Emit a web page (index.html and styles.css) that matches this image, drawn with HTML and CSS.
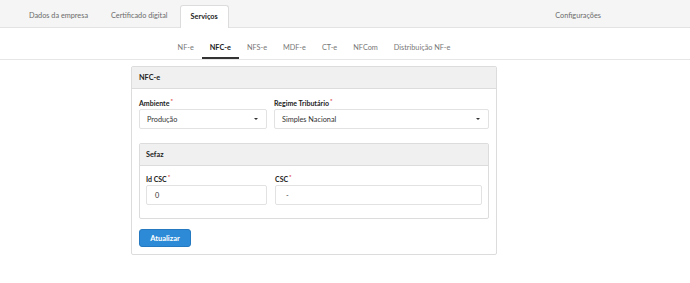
FILE: index.html
```html
<!DOCTYPE html>
<html lang="pt">
<head>
<meta charset="utf-8">
<link rel="stylesheet" href="styles.css">
</head>
<body>
<div class="topbar">
  <div class="tab">Dados da empresa</div>
  <div class="tab">Certificado digital</div>
  <div class="tab active">Serviços</div>
  <div class="tab right">Configurações</div>
</div>
<div class="subnav">
  <div class="subnav-inner">
    <div class="sub">NF-e</div>
    <div class="sub active">NFC-e</div>
    <div class="sub">NFS-e</div>
    <div class="sub">MDF-e</div>
    <div class="sub">CT-e</div>
    <div class="sub">NFCom</div>
    <div class="sub">Distribuição NF-e</div>
  </div>
</div>
<div class="main">
  <div class="card">
    <div class="card-head">NFC-e</div>
    <div class="card-body">
      <div class="row row-top">
        <div class="field">
          <div class="label">Ambiente<span class="req">*</span></div>
          <div class="select"><span>Produção</span><span class="caret"></span></div>
        </div>
        <div class="field">
          <div class="label">Regime Tributário<span class="req">*</span></div>
          <div class="select"><span>Simples Nacional</span><span class="caret"></span></div>
        </div>
      </div>
      <div class="panel">
        <div class="panel-head">Sefaz</div>
        <div class="panel-body">
          <div class="row row-sefaz">
            <div class="field">
              <div class="label">Id CSC<span class="req">*</span></div>
              <div class="input">0</div>
            </div>
            <div class="field">
              <div class="label">CSC<span class="req">*</span></div>
              <div class="input dash">-</div>
            </div>
          </div>
        </div>
      </div>
      <button class="btn">Atualizar</button>
    </div>
  </div>
</div>
</body>
</html>
```

FILE: styles.css
```css
* { box-sizing: border-box; }
html, body { margin: 0; padding: 0; background: #fff; }
body {
  font-family: Lato, "Open Sans", sans-serif;
  font-size: 7.3px;
  color: #333;
  width: 690px;
}
.topbar {
  display: flex;
  height: 28px;
  padding: 5px 77px 0 18px;
  background: #f5f5f5;
  border-bottom: 1px solid #e3e3e3;
}
.tab {
  height: 23px;
  padding: 0 11px;
  line-height: 22px;
  color: #6b6b6b;
  margin-right: 1px;
}
.tab.active {
  background: #fff;
  border: 1px solid #dcdcdc;
  border-bottom: none;
  border-radius: 3px 3px 0 0;
  color: #222;
  font-weight: bold;
  padding: 0 10px;
}
.tab.right { margin-left: auto; }
.subnav {
  height: 32px;
  border-bottom: 1px solid #e6e6e6;
}
.subnav-inner {
  display: flex;
  justify-content: center;
  width: 366px;
  margin-left: 131px;
  height: 31px;
}
.sub {
  padding: 0 8px;
  line-height: 40px;
  height: 31px;
  color: #777;
  white-space: nowrap;
}
.sub.active {
  color: #222;
  font-weight: bold;
  border-bottom: 2px solid #333;
}
.main {
  margin-left: 131px;
  width: 366px;
  padding-top: 6px;
}
.card {
  border: 1px solid #dcdcdc;
  border-radius: 2px;
}
.card-head {
  height: 22px;
  background: #f0f0f0;
  border-bottom: 1px solid #dcdcdc;
  padding-left: 7px;
  line-height: 21px;
  font-weight: bold;
  color: #222;
}
.card-body {
  padding: 7px;
}
.row { display: grid; }
.row-top { grid-template-columns: 128px 1fr; column-gap: 7px; }
.row-sefaz { grid-template-columns: 121px 1fr; column-gap: 8px; }
.label {
  font-weight: bold;
  color: #222;
  line-height: 10px;
  height: 13px;
  font-size: 7px;
}
.req {
  color: #e03030;
  font-size: 6px;
  vertical-align: 3px;
  margin-left: 1px;
}
.select {
  height: 20px;
  border: 1px solid #e2e2e2;
  border-radius: 2px;
  display: flex;
  align-items: center;
  justify-content: space-between;
  padding: 0 8px 0 7px;
  color: #333;
}
.caret {
  width: 0; height: 0;
  border-left: 2px solid transparent;
  border-right: 2px solid transparent;
  border-top: 2px solid #333;
}
.panel {
  margin-top: 14px;
  border: 1px solid #dcdcdc;
  border-radius: 2px;
}
.panel-head {
  height: 22px;
  background: #f0f0f0;
  border-bottom: 1px solid #dcdcdc;
  padding-left: 6px;
  line-height: 21px;
  font-weight: bold;
  color: #222;
}
.panel-body { padding: 6px 6px 13px 6px; }
.input {
  height: 20px;
  border: 1px solid #e2e2e2;
  border-radius: 2px;
  padding: 0 8px;
  line-height: 19px;
  color: #333;
}
.input.dash { padding-left: 10px; }
.btn {
  margin-top: 10px;
  display: block;
  width: 52px;
  height: 18px;
  background: #2d8ad6;
  border: 1px solid #2479c0;
  border-radius: 3px;
  color: #fff;
  font-family: Lato, "Open Sans", sans-serif;
  font-size: 7.5px;
  font-weight: bold;
  padding: 0;
}
```
